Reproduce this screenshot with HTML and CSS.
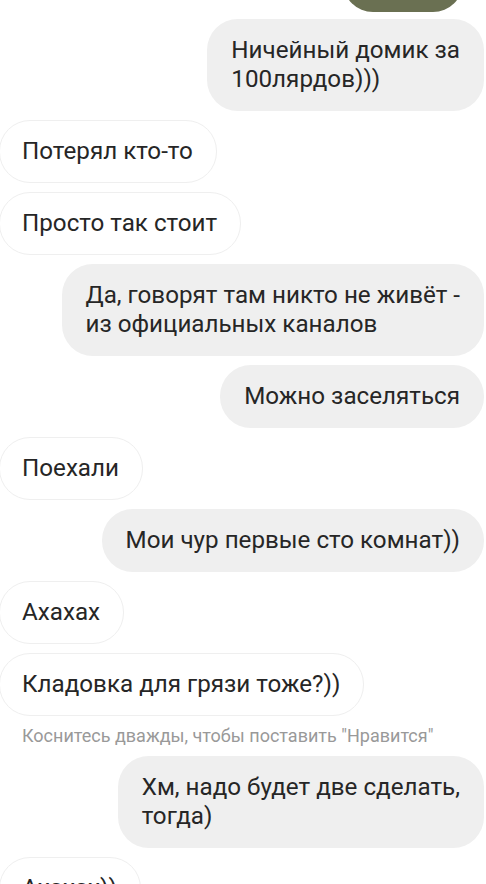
FILE: index.html
```html
<!DOCTYPE html>
<html lang="ru">
<head>
    <meta charset="UTF-8">
    <meta name="viewport" content="width=device-width, initial-scale=1.0">
    <title>Direct</title>
    <link rel="stylesheet" href="styles.css">
</head>
<body>
    <div class="chat">
        <!-- Previous message (cut off at the top) -->
        <div class="media"></div>

        <div class="msg out">Ничейный домик за<br>100лярдов)))</div>
        <div class="msg in">Потерял кто-то</div>
        <div class="msg in">Просто так стоит</div>
        <div class="msg out">Да, говорят там никто не живёт -<br>из официальных каналов</div>
        <div class="msg out">Можно заселяться</div>
        <div class="msg in">Поехали</div>
        <div class="msg out">Мои чур первые сто комнат))</div>
        <div class="msg in">Ахахах</div>
        <div class="msg in">Кладовка для грязи тоже?))</div>

        <div class="hint">Коснитесь дважды, чтобы поставить "Нравится"</div>

        <div class="msg out">Хм, надо будет две сделать,<br>тогда)</div>
        <div class="msg in">Ахахах))</div>
    </div>
</body>
</html>
```

FILE: styles.css
```css
body {
    margin: 0;
    background-color: #fff;
    font-family: Roboto, "Noto Sans", sans-serif;
    overflow: hidden;
}
.chat {
    display: flex;
    flex-direction: column;
    gap: 9px;
    padding-right: 2px;
}
.media {
    align-self: flex-end;
    width: 120px;
    height: 60px;
    margin-top: -48px;
    margin-right: 21px;
    margin-bottom: -2px;
    background-color: #6a7052;
    border-radius: 30px;
}
.msg {
    font-size: 24.2px;
    line-height: 29px;
    color: #262626;
    padding: 17px 24px;
    border-radius: 31px;
    white-space: nowrap;
}
.msg.out {
    align-self: flex-end;
    background-color: #efefef;
}
.msg.in {
    align-self: flex-start;
    border: 1px solid #efefef;
    padding: 16px 23px 16px 22px;
    margin-left: -1px;
}
.hint {
    font-size: 18px;
    line-height: 22px;
    color: #999;
    padding-left: 22px;
}
```
